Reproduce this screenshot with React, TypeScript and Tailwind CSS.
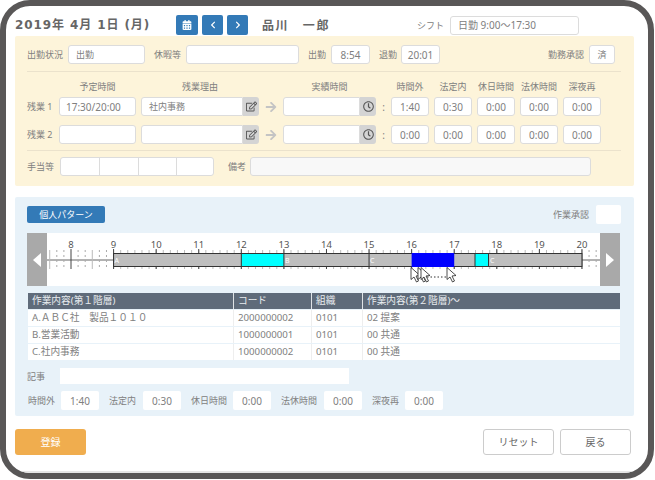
import { FaArrowRight, FaCalendarAlt, FaChevronLeft, FaChevronRight, FaRegClock, FaRegEdit } from "react-icons/fa";

const hours = [8, 9, 10, 11, 12, 13, 14, 15, 16, 17, 18, 19, 20];
const hourW = 42.58;
const xOf = (h: number) => 24 + (h - 8) * hourW;

const rows = [
  { name: "A.ＡＢＣ社　製品１０１０", code: "2000000002", org: "0101", sub: "02 提案" },
  { name: "B.営業活動", code: "1000000001", org: "0101", sub: "00 共通" },
  { name: "C.社内事務", code: "1000000002", org: "0101", sub: "00 共通" },
];

const inputBox = "flex items-center rounded-[3px] border border-[#dcdcdc] text-[#808080] h-[19px]";
const blueBtn = "flex h-5 items-center justify-center rounded-[2px] bg-[#337ab7] text-white";
const label = "text-[9px] text-[#808080] whitespace-nowrap";
const addon = "flex h-[19px] w-4 items-center justify-center rounded-r-[3px] bg-[#d4d4d4] text-[#555]";

function Cursor({ x }: { x: number }) {
  return (
    <path
      transform={`translate(${x} 34.5)`}
      d="M0 0 L0 12 L3 9.5 L5.5 14.5 L7.5 13.5 L5 8.5 L9 8 Z"
      fill="#fff"
      stroke="#222"
      strokeWidth="0.8"
    />
  );
}

function Timeline() {
  const ticks: number[] = [];
  for (let i = 0; i <= 11 * 6; i++) ticks.push(9 + i / 6);
  const dotted = [7 + 4 / 6, 7 + 5 / 6, 8 + 1 / 6, 8 + 2 / 6, 8 + 4 / 6, 8 + 5 / 6, 20 + 1 / 6, 20 + 2 / 6];
  return (
    <svg width="553" height="53" viewBox="0 0 553 53" className="block" fontFamily="'Noto Sans', sans-serif">
      <line x1="0" x2="67" y1="27" y2="27" stroke="#666" />
      <line x1="534" x2="553" y1="27" y2="27" stroke="#666" />
      {dotted.map((d) => (
        <line key={d} x1={xOf(d)} x2={xOf(d)} y1="17" y2="36" stroke="#aaa" strokeDasharray="2 3" />
      ))}
      {[7.5, 8.5].map((d) => (
        <line key={d} x1={xOf(d)} x2={xOf(d)} y1="17" y2="36" stroke="#bbb" />
      ))}
      {ticks.map((t) => (
        <g key={t} stroke="#bbb">
          <line x1={xOf(t)} x2={xOf(t)} y1="17" y2="20" />
          <line x1={xOf(t)} x2={xOf(t)} y1="34" y2="36" />
        </g>
      ))}
      {hours.map((h) => (
        <g key={h}>
          <line x1={xOf(h)} x2={xOf(h)} y1="16" y2="36" stroke="#444" />
          <text x={xOf(h)} y="15" textAnchor="middle" fontSize="9.5" fill="#555">
            {h}
          </text>
        </g>
      ))}
      <rect x={xOf(9)} y="20.5" width={xOf(20) - xOf(9)} height="13" fill="#bebebe" stroke="#333" />
      <rect x={xOf(12)} y="20.5" width={hourW} height="13" fill="#00ffff" stroke="#333" />
      <line x1={xOf(15)} x2={xOf(15)} y1="20" y2="34" stroke="#333" />
      <rect x={xOf(16)} y="20" width={hourW} height="14" fill="#0000ff" />
      <rect x="428" y="20.5" width="13.5" height="13" fill="#00ffff" stroke="#333" />
      <g fontSize="7" fill="#fff">
        <text x={xOf(9) + 1} y="30">A</text>
        <text x={xOf(13) + 1} y="30">B</text>
        <text x={xOf(15) + 1} y="30">C</text>
        <text x="443" y="30">C</text>
      </g>
      <Cursor x={364} />
      <Cursor x={371} />
      <Cursor x={374} />
      <Cursor x={400} />
      <line x1="380" x2="400" y1="44" y2="44" stroke="#333" strokeDasharray="1.5 2" />
    </svg>
  );
}

export default function App() {
  return (
    <div className="h-[480px] w-[655px] overflow-hidden bg-white font-['Noto_Sans','Noto_Sans_CJK_JP',sans-serif] text-[10px] leading-none">
      <div className="h-[479px] w-[654px] overflow-hidden rounded-[30px] border-[6px] border-[#595757]">
        <div className="h-full border-b-2 border-[#e6e6e6] pl-[9px] pr-[14px] pt-[9px]">
          {/* Header */}
          <div className="flex h-5 items-center">
            <div className="w-[161px] whitespace-nowrap font-['DejaVu_Sans','Noto_Sans_CJK_JP',sans-serif] text-[12px] font-bold tracking-[0.9px] text-[#666]">
              2019年 4月 1日 (月)
            </div>
            <button className={`${blueBtn} w-[22px]`}><FaCalendarAlt size={10} /></button>
            <button className={`${blueBtn} ml-1 w-[21px]`}><FaChevronLeft size={8} /></button>
            <button className={`${blueBtn} ml-1 w-[21px]`}><FaChevronRight size={8} /></button>
            <div className="ml-[14px] w-[155px] font-['Noto_Sans_CJK_JP',sans-serif] text-[12px] font-bold tracking-[1.6px] text-[#666]">
              品川　一郎
            </div>
            <span className={label}>シフト</span>
            <div className={`${inputBox} ml-[6px] h-[18px] w-[129px] bg-white pl-[7px]`}>日勤 9:00～17:30</div>
          </div>

          {/* Attendance */}
          <div className="mt-[1px] h-[150px] w-[619px] rounded-[2px] bg-[#fdf4da] pl-[12px] pr-[13px] pt-[9px]">
            <div className="flex items-center pr-[6px]">
              <span className={`${label} w-[41px]`}>出勤状況</span>
              <div className={`${inputBox} w-[77px] bg-white pl-[7px] text-[9px]`}>出勤</div>
              <span className={`${label} ml-[9px] w-[32px]`}>休暇等</span>
              <div className={`${inputBox} w-[113px] bg-white`} />
              <span className={`${label} ml-[9px] w-[23px]`}>出勤</span>
              <div className={`${inputBox} w-[39px] justify-center bg-white`}>8:54</div>
              <span className={`${label} ml-[9px] w-[22px]`}>退勤</span>
              <div className={`${inputBox} w-[39px] justify-center bg-white`}>20:01</div>
              <span className={`${label} ml-auto mr-[5px]`}>勤務承認</span>
              <div className={`${inputBox} w-[26px] justify-center bg-white text-[9px]`}>済</div>
            </div>
            <div className="mt-[7px] border-t border-[#ebe2cc]" />

            <div className="mt-[9px] flex h-[10px] items-center whitespace-nowrap text-center text-[9px] text-[#808080]">
              <span className="ml-[32px] w-[77px]">予定時間</span>
              <span className="ml-[5px] w-[118px]">残業理由</span>
              <span className="ml-[24px] w-[93px]">実績時間</span>
              <span className="ml-[15px] w-[38px]">時間外</span>
              <span className="ml-[5px] w-[38px]">法定内</span>
              <span className="ml-[5px] w-[38px]">休日時間</span>
              <span className="ml-[5px] w-[38px]">法休時間</span>
              <span className="ml-[5px] w-[38px]">深夜再</span>
            </div>

            {[
              { no: "残業 1", plan: "17:30/20:00", why: "社内事務", vals: ["1:40", "0:30", "0:00", "0:00", "0:00"] },
              { no: "残業 2", plan: "", why: "", vals: ["0:00", "0:00", "0:00", "0:00", "0:00"] },
            ].map((r, i) => (
              <div key={r.no} className={`flex items-center ${i === 0 ? "mt-[6px]" : "mt-[9px]"}`}>
                <span className={`${label} w-[32px]`}>{r.no}</span>
                <div className={`${inputBox} w-[77px] bg-white pl-[6px]`}>{r.plan}</div>
                <div className={`${inputBox} ml-[5px] w-[102px] rounded-r-none bg-white pl-[7px] text-[9px]`}>{r.why}</div>
                <div className={addon}><FaRegEdit size={11} /></div>
                <FaArrowRight size={12} className="ml-[6px] text-[#c4c4c4]" />
                <div className={`${inputBox} ml-[6px] w-[77px] rounded-r-none bg-white`} />
                <div className={addon}><FaRegClock size={11} /></div>
                <span className="w-[15px] text-center text-[#808080]">:</span>
                <div className="flex gap-[5px]">
                  {r.vals.map((v, j) => (
                    <div key={j} className={`${inputBox} w-[38px] justify-center bg-white`}>{v}</div>
                  ))}
                </div>
              </div>
            ))}

            <div className="mt-[6px] border-t border-[#ebe2cc]" />
            <div className="mt-[6px] flex items-center">
              <span className={`${label} w-[33px]`}>手当等</span>
              <div className={`${inputBox} w-[154px] bg-white`}>
                <div className="h-full w-[39px] border-r border-[#dcdcdc]" />
                <div className="h-full w-[39px] border-r border-[#dcdcdc]" />
                <div className="h-full w-[38px] border-r border-[#dcdcdc]" />
              </div>
              <span className={`${label} ml-[14px] w-[22px]`}>備考</span>
              <div className={`${inputBox} w-[341px] bg-[#f8f8f8]`} />
            </div>
          </div>

          {/* Work pattern */}
          <div className="mt-[11px] h-[219px] w-[619px] rounded-[2px] bg-[#e8f2f9] pl-[12px] pr-[14px] pt-[8px]">
            <div className="flex items-center">
              <button className="flex h-[17px] w-[78px] items-center justify-center rounded-[2px] bg-[#337ab7] text-[9px] text-white">
                個人パターン
              </button>
              <span className={`${label} ml-auto mr-[7px]`}>作業承認</span>
              <div className="-mr-px h-[19px] w-[25px] rounded-[2px] bg-white" />
            </div>

            <div className="mt-[9px] flex h-[53px] bg-white">
              <div className="flex w-5 items-center justify-center bg-[#a9a9a9]">
                <div className="h-0 w-0 border-y-[7px] border-r-[8px] border-y-transparent border-r-white" />
              </div>
              <Timeline />
              <div className="flex w-5 items-center justify-center bg-[#a9a9a9]">
                <div className="h-0 w-0 border-y-[7px] border-l-[8px] border-y-transparent border-l-white" />
              </div>
            </div>

            <div className="ml-[1px] mt-[7px] text-[9.7px]">
              <div className="flex h-[16px] items-center bg-[#5f6b7a] text-[#e8ecef]">
                <div className="w-[206px] border-r border-[#dfe3e6] pl-1 leading-[16px]">作業内容(第１階層)</div>
                <div className="w-[78px] border-r border-[#dfe3e6] pl-1 leading-[16px]">コード</div>
                <div className="w-[51px] border-r border-[#dfe3e6] pl-1 leading-[16px]">組織</div>
                <div className="flex-1 pl-1">作業内容(第２階層)～</div>
              </div>
              {rows.map((r) => (
                <div key={r.name} className="mt-px flex h-[16px] items-center bg-white text-[#808080]">
                  <div className="w-[206px] border-r border-[#eeeeee] pl-1 leading-[16px]">{r.name}</div>
                  <div className="w-[78px] border-r border-[#eeeeee] pl-1 leading-[16px]">{r.code}</div>
                  <div className="w-[51px] border-r border-[#eeeeee] pl-1 leading-[16px]">{r.org}</div>
                  <div className="flex-1 pl-1">{r.sub}</div>
                </div>
              ))}
            </div>

            <div className="mt-2 flex items-center">
              <span className={`${label} w-[33px]`}>記事</span>
              <div className="h-[16px] w-[289px] bg-white" />
            </div>

            <div className="ml-px mt-[7px] flex items-center">
              {[
                { k: "時間外", w: "w-[33px]", v: "1:40" },
                { k: "法定内", w: "w-[34px]", v: "0:30" },
                { k: "休日時間", w: "w-[42px]", v: "0:00" },
                { k: "法休時間", w: "w-[43px]", v: "0:00" },
                { k: "深夜再", w: "w-[33px]", v: "0:00" },
              ].map((f) => (
                <div key={f.k} className="mr-[10px] flex items-center">
                  <span className={`${label} ${f.w}`}>{f.k}</span>
                  <div className="flex h-[19px] w-[38px] items-center justify-center rounded-[2px] bg-white text-[#808080]">{f.v}</div>
                </div>
              ))}
            </div>
          </div>

          {/* Footer */}
          <div className="mt-[13px] flex w-[616px] items-center">
            <button className="flex h-[26px] w-[71px] items-center justify-center rounded-[3px] bg-[#f0ad4e] text-white">登録</button>
            <button className="ml-auto flex h-[26px] w-[71px] items-center justify-center rounded-[3px] border border-[#cccccc] bg-white text-[#666]">リセット</button>
            <button className="ml-[6px] flex h-[26px] w-[71px] items-center justify-center rounded-[3px] border border-[#cccccc] bg-white text-[#666]">戻る</button>
          </div>
        </div>
      </div>
    </div>
  );
}
